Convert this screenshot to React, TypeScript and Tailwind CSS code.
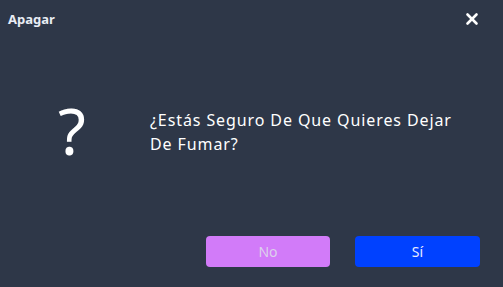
import { X } from 'lucide-react';

export default function App() {
  return (
    <div className="w-[503px] h-[287px] bg-[#2e3748] flex flex-col text-white" style={{ fontFamily: '"Noto Sans", "Open Sans", sans-serif' }}>
      {/* Header */}
      <div className="h-[40px] flex items-center justify-between pl-[8px] pr-[22px]">
        <span className="text-[13px] font-bold text-[#e8ecf4] -mt-[1px]">Apagar</span>
        <X className="w-[18px] h-[18px] text-white -mt-[2px]" strokeWidth={3.5} />
      </div>

      {/* Body */}
      <div className="flex items-center pl-[58px] pt-[61px]">
        <span className="text-[64px] leading-none font-normal text-white w-[92px] -mt-[2px]">?</span>
        <p className="text-[16px] leading-[24px] tracking-[0.9px] text-white w-[310px]">
          ¿Estás Seguro De Que Quieres Dejar De Fumar?
        </p>
      </div>

      {/* Footer */}
      <div className="mt-auto mb-[20px] flex justify-end gap-[25px] pr-[23px]">
        <button className="w-[124px] h-[31px] rounded-[4px] bg-[#d27bf9] text-[#dcd0ec] text-[14px]">No</button>
        <button className="w-[125px] h-[31px] rounded-[4px] bg-[#0041ff] text-[#e8ecff] text-[14px]">Sí</button>
      </div>
    </div>
  );
}
